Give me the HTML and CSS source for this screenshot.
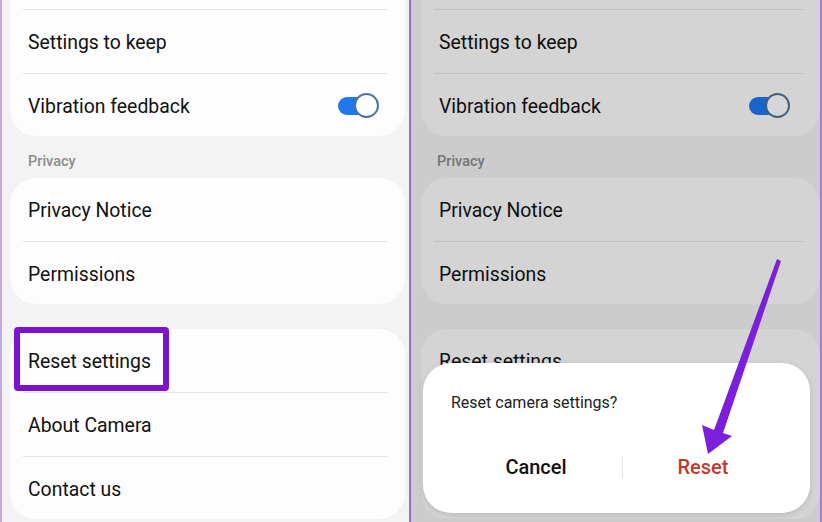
FILE: index.html
```html
<!DOCTYPE html>
<html>
<head>
<meta charset="utf-8">
<link rel="stylesheet" href="styles.css">
</head>
<body>
<div class="screen">
  <div class="panel panel-left">
    <div class="card card-top">
      <div class="sep"></div>
      <div class="row">Settings to keep</div>
      <div class="sep"></div>
      <div class="row row-last">Vibration feedback<span class="toggle"><span class="thumb"></span></span></div>
    </div>
    <div class="section-label">Privacy</div>
    <div class="card">
      <div class="row">Privacy Notice</div>
      <div class="sep"></div>
      <div class="row row-last">Permissions</div>
    </div>
    <div class="card card-bottom">
      <div class="row row-hl">Reset settings<span class="highlight"></span></div>
      <div class="sep"></div>
      <div class="row">About Camera</div>
      <div class="sep"></div>
      <div class="row row-last">Contact us</div>
    </div>
  </div>
  <div class="panel panel-right">
    <div class="card card-top card-wide">
      <div class="sep"></div>
      <div class="row">Settings to keep</div>
      <div class="sep"></div>
      <div class="row row-last">Vibration feedback<span class="toggle"><span class="thumb"></span></span></div>
    </div>
    <div class="section-label">Privacy</div>
    <div class="card card-wide">
      <div class="row">Privacy Notice</div>
      <div class="sep"></div>
      <div class="row row-last">Permissions</div>
    </div>
    <div class="card card-bottom card-wide">
      <div class="row">Reset settings</div>
      <div class="sep"></div>
      <div class="row">About Camera</div>
      <div class="sep"></div>
      <div class="row row-last">Contact us</div>
    </div>
    <div class="dim"></div>
    <div class="dialog">
      <div class="dialog-title">Reset camera settings?</div>
      <div class="dialog-actions">
        <span class="btn btn-cancel">Cancel</span>
        <span class="btn-divider"></span>
        <span class="btn btn-reset">Reset</span>
      </div>
    </div>
  </div>
  <svg class="arrow" width="822" height="522" viewBox="0 0 822 522">
    <polygon points="777,259 781,261 723,433 732,436 708,454 702,425 714,430" fill="#7b1fdc"/>
  </svg>
</div>
</body>
</html>
```

FILE: styles.css
```css
html, body {
  margin: 0;
  padding: 0;
}
body {
  width: 822px;
  height: 522px;
  overflow: hidden;
  font-family: Roboto, "Noto Sans", sans-serif;
  color: #111;
  background: #f3f3f3;
}
.screen {
  position: relative;
  display: flex;
  width: 822px;
  height: 522px;
}
.panel {
  position: relative;
  height: 522px;
  background: #f3f3f3;
  box-sizing: border-box;
  overflow: hidden;
}
.panel-left {
  width: 411px;
  border-left: 2px solid #c6a9e0;
  border-right: 2px solid #9a66d8;
}
.panel-right {
  width: 411px;
  border-right: 2px solid #a57ad6;
}
.card {
  background: #fdfdfd;
  border-radius: 26px;
  margin: 0 4px 0 8px;
  padding: 0 0 0 18px;
}
.card-wide {
  margin-right: 0;
}
.panel-right .card {
  margin-left: 10px;
}
.card-top {
  border-radius: 0 0 26px 26px;
  padding-top: 9px;
}
.card-bottom {
  margin-top: 25px;
}
.row {
  position: relative;
  height: 63px;
  box-sizing: border-box;
  padding-top: 2px;
  display: flex;
  align-items: center;
  font-size: 19.4px;
}
.row-last {
  height: 62px;
}
.sep {
  height: 1px;
  background: #e4e4e4;
  margin: 0 17px 0 -5px;
}
.section-label {
  height: 42px;
  box-sizing: border-box;
  padding: 17px 0 0 26px;
  font-size: 14.5px;
  font-weight: 500;
  color: #8c8c8c;
}
.toggle {
  position: absolute;
  left: 310px;
  top: 32px;
  width: 34px;
  height: 18px;
  margin-top: -9px;
  border-radius: 9px;
  background: #1f78ee;
}
.thumb {
  position: absolute;
  left: 16px;
  top: -4px;
  width: 21px;
  height: 21px;
  border-radius: 50%;
  background: #fff;
  border: 2px solid #4f7396;
}
.highlight {
  position: absolute;
  left: -14px;
  top: -2px;
  width: 143px;
  height: 52px;
  border: 6px solid #7b12cc;
  border-radius: 4px;
}
.dim {
  position: absolute;
  inset: 0;
  background: rgba(0, 0, 0, 0.16);
}
.dialog {
  position: absolute;
  left: 12px;
  top: 363px;
  width: 387px;
  height: 150px;
  box-sizing: border-box;
  background: #fff;
  border-radius: 28px;
  box-shadow: 0 2px 6px rgba(0, 0, 0, 0.12);
  padding: 30px 0 0 27px;
}
.dialog-title {
  font-size: 16px;
  color: #222;
  height: 20px;
  line-height: 20px;
  padding-left: 1px;
}
.dialog-actions {
  display: flex;
  align-items: center;
  height: 24px;
  margin-top: 42px;
}
.btn {
  text-align: center;
  font-size: 20px;
  font-weight: 500;
}
.btn-cancel {
  width: 172px;
  color: #111;
}
.btn-reset {
  width: 160px;
  color: #c3392e;
}
.btn-divider {
  width: 1px;
  height: 22px;
  background: #e2e2e2;
}
.arrow {
  position: absolute;
  left: 0;
  top: 0;
  pointer-events: none;
}
```
